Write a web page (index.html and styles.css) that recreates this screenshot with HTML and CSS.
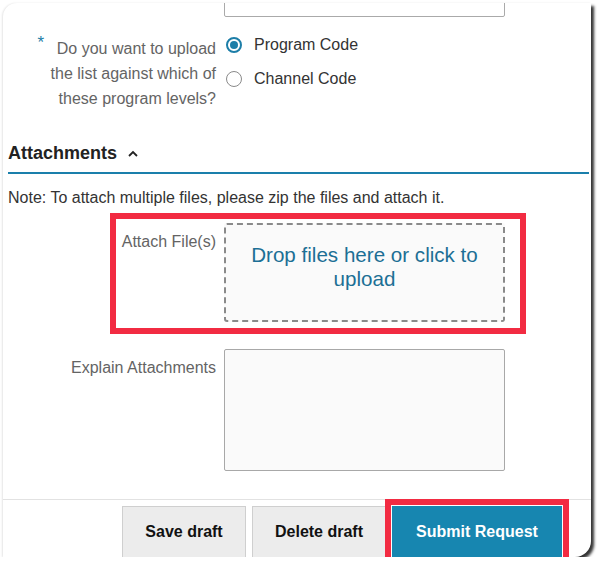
FILE: index.html
```html
<!DOCTYPE html>
<html lang="en">
<head>
  <meta charset="UTF-8" />
  <meta name="viewport" content="width=device-width, initial-scale=1.0" />
  <title>Request - Attachments</title>
  <link rel="stylesheet" href="styles.css">
</head>
<body>
  <div class="paper">
    <div class="form">
      <div class="row">
        <div></div>
        <div class="text-input"></div>
      </div>

      <div class="row radio-row">
        <div class="label multi">
          <span class="req">*</span>
          <span class="question">Do you want to upload the list against which of these program levels?</span>
        </div>
        <div class="radios">
          <label class="radio"><span class="dot checked"></span>Program Code</label>
          <label class="radio"><span class="dot"></span>Channel Code</label>
        </div>
      </div>

      <div class="section-head">
        <span>Attachments</span>
        <svg class="caret" width="10" height="7" viewBox="0 0 10 7"><polyline points="1,6 5,2 9,6" fill="none" stroke="#222" stroke-width="1.8"/></svg>
      </div>

      <p class="note">Note: To attach multiple files, please zip the files and attach it.</p>

      <div class="annot">
        <div class="label top">Attach File(s)</div>
        <div class="dropzone">Drop files here or click to upload</div>
      </div>

      <div class="row explain-row">
        <div class="label top">Explain Attachments</div>
        <div class="textarea"></div>
      </div>
    </div>

    <div class="footer">
      <button class="btn">Save draft</button>
      <button class="btn">Delete draft</button>
      <button class="btn primary">Submit Request</button>
    </div>
  </div>
</body>
</html>
```

FILE: styles.css
```css
body {
  margin: 0;
  background: #fff;
  font-family: "Liberation Sans", Arial, sans-serif;
  font-size: 16px;
  color: #333;
}

.paper {
  margin: 3px 0 0 3px;
  width: 588px;
  height: 554px;
  overflow: hidden;
  background: #fff;
  border-radius: 14px 0 16px 0;
  box-shadow: 3px 3px 3px rgba(0, 0, 0, 0.8), -1px 0 2px rgba(0, 0, 0, 0.1);
}

.form {
  padding-left: 5px;
}

.row {
  display: grid;
  grid-template-columns: 208px 281px;
  column-gap: 8px;
}

.text-input {
  height: 30px;
  margin-top: -16px;
  border: 1px solid #aaa;
  border-radius: 2px;
  box-sizing: border-box;
  background: #fff;
}

.label {
  text-align: right;
  color: #646464;
  line-height: 20px;
}

.label.multi {
  display: flex;
  justify-content: flex-end;
  align-items: flex-start;
  line-height: 25px;
  padding-top: 4px;
}

.question {
  width: 168px;
}

.req {
  color: #1d7ea8;
  font-size: 17px;
  line-height: 16px;
  margin: -1px 4px 0 0;
}

.radio-row {
  margin-top: 15px;
}

.radios {
  display: flex;
  flex-direction: column;
  gap: 9px;
}

.radio {
  display: flex;
  align-items: center;
  height: 25px;
  color: #333;
  padding-left: 2px;
}

.dot {
  width: 16px;
  height: 16px;
  box-sizing: border-box;
  border: 1.5px solid #8a8a8a;
  border-radius: 50%;
  margin-right: 12px;
  position: relative;
}

.dot.checked {
  border: 2px solid #1d7ea8;
}

.dot.checked::after {
  content: "";
  position: absolute;
  left: 2px;
  top: 2px;
  width: 8px;
  height: 8px;
  border-radius: 50%;
  background: #1d7ea8;
}

.section-head {
  margin: 31px 2px 0 0;
  padding-bottom: 8px;
  border-bottom: 2px solid #1a7fab;
  font-size: 18px;
  font-weight: bold;
  color: #222;
  line-height: 22px;
  display: flex;
  align-items: center;
}

.caret {
  margin-left: 11px;
}

.note {
  margin: 14px 0 0;
  line-height: 20px;
  color: #333;
}

.annot {
  margin: 5px 0 0 102px;
  width: 416px;
  box-sizing: border-box;
  border: 6px solid #f22b42;
  padding: 4px 15px 6px 0;
  display: grid;
  grid-template-columns: 100px 281px;
  column-gap: 8px;
}

.label.top {
  padding-top: 9px;
}

.dropzone {
  height: 99px;
  box-sizing: border-box;
  border: 2px dashed #8a8a8a;
  border-radius: 3px;
  background: #fafafa;
  color: #1c6f95;
  font-size: 20.6px;
  line-height: 24px;
  text-align: center;
  padding: 18px 20px 0;
}

.explain-row {
  margin-top: 15px;
}

.textarea {
  height: 122px;
  box-sizing: border-box;
  border: 1px solid #a8a8a8;
  border-radius: 2px;
  background: #fafafa;
}

.footer {
  margin-top: 28px;
  border-top: 1px solid #e2e2e2;
  padding: 6px 29px 0 0;
  display: flex;
  justify-content: flex-end;
  gap: 6px;
}

.btn {
  height: 52px;
  padding: 0;
  font-family: "Liberation Sans", Arial, sans-serif;
  font-size: 16px;
  font-weight: bold;
  color: #111;
  background: #ececec;
  border: 1px solid #cfcfcf;
  width: 124px;
}

.btn:nth-child(2) {
  width: 134px;
}

.btn.primary {
  width: 170px;
  background: #1786b0;
  border-color: #1786b0;
  color: #fff;
  outline: 6px solid #f22b42;
  outline-offset: 1px;
}
```
